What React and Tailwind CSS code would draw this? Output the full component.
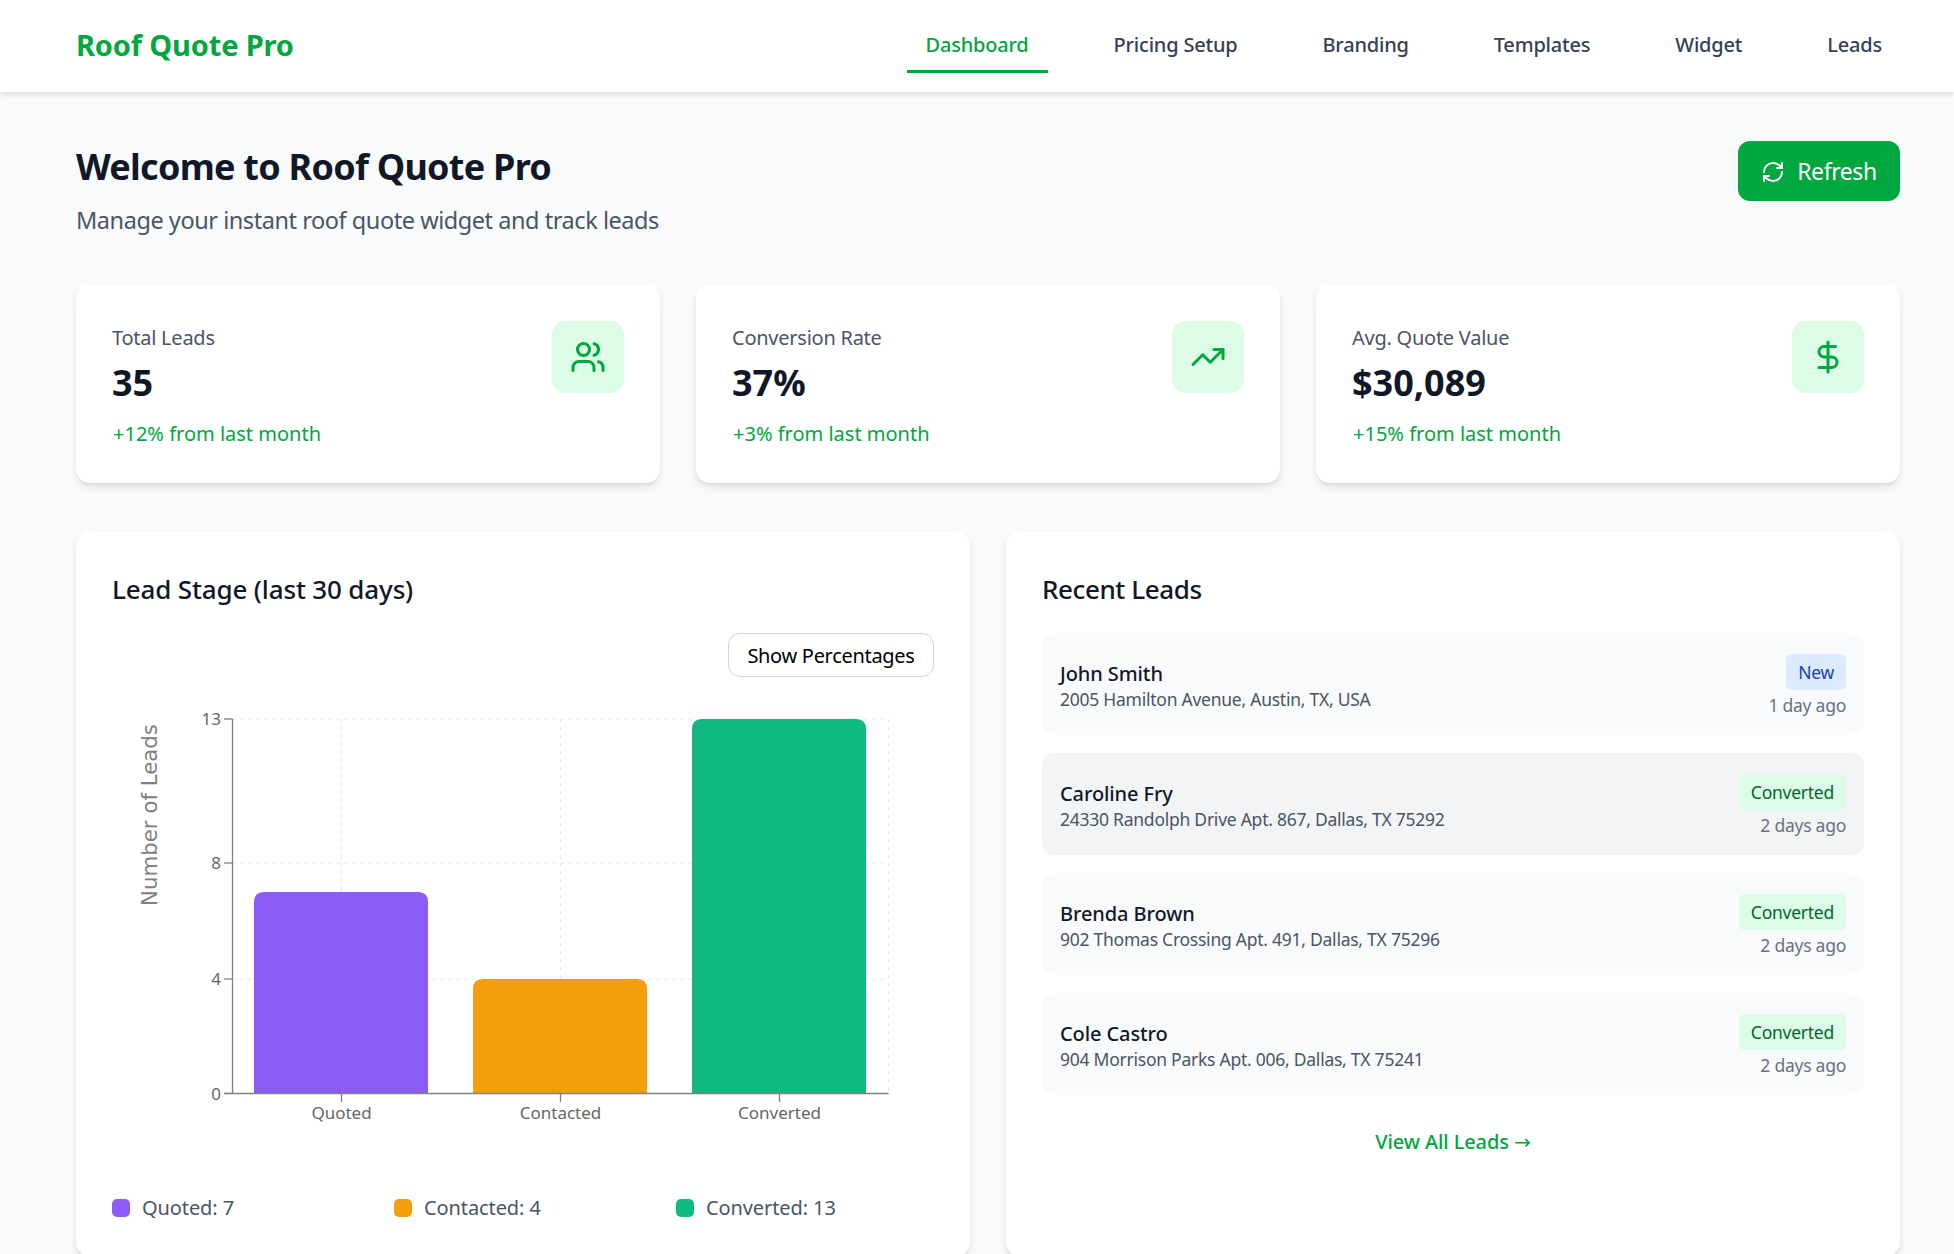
import React from 'react'
import { Users, TrendingUp, DollarSign, RefreshCw } from 'lucide-react'

const navItems = ['Dashboard', 'Pricing Setup', 'Branding', 'Templates', 'Widget', 'Leads']

const stats = [
  { label: 'Total Leads', value: '35', change: '+12% from last month', Icon: Users },
  { label: 'Conversion Rate', value: '37%', change: '+3% from last month', Icon: TrendingUp },
  { label: 'Avg. Quote Value', value: '$30,089', change: '+15% from last month', Icon: DollarSign },
]

const leads = [
  { name: 'John Smith', address: '2005 Hamilton Avenue, Austin, TX, USA', status: 'New', time: '1 day ago' },
  { name: 'Caroline Fry', address: '24330 Randolph Drive Apt. 867, Dallas, TX 75292', status: 'Converted', time: '2 days ago', active: true },
  { name: 'Brenda Brown', address: '902 Thomas Crossing Apt. 491, Dallas, TX 75296', status: 'Converted', time: '2 days ago' },
  { name: 'Cole Castro', address: '904 Morrison Parks Apt. 006, Dallas, TX 75241', status: 'Converted', time: '2 days ago' },
]

function Nav() {
  return (
    <nav className="h-[92px] bg-white shadow-[0_2px_5px_rgba(0,0,0,0.14)] relative flex items-center justify-between pl-[76px] pr-[53px]">
      <div className="text-[29px] font-bold text-[#00a63e] tracking-[-0.15px] mt-[-2px]">Roof Quote Pro</div>
      <ul className="flex gap-[47px] h-[50px] mt-[4px]">
        {navItems.map((item, i) => (
          <li
            key={item}
            className={
              i === 0
                ? 'px-[19px] text-[20px] font-medium tracking-[-0.2px] text-[#00a63e] border-b-[3px] border-[#00a63e] leading-[44px]'
                : 'px-[19px] text-[20px] font-medium tracking-[-0.2px] text-[#364153] leading-[44px]'
            }
          >
            {item}
          </li>
        ))}
      </ul>
    </nav>
  )
}

function StatCard({ label, value, change, Icon }) {
  return (
    <div className="h-[198px] bg-white rounded-[14px] shadow-[0_5px_8px_-1px_rgba(0,0,0,0.1),0_2px_5px_-2px_rgba(0,0,0,0.1)] p-[36px] flex justify-between">
      <div>
        <div className="text-[20px] leading-[32px] text-[#4a5565] tracking-[-0.25px] mt-[1px]">{label}</div>
        <div className="text-[36px] leading-[48px] font-bold text-[#101828] mt-[5px]">{value}</div>
        <div className="text-[20px] leading-[32px] text-[#00a63e] mt-[11px] ml-[1px]">{change}</div>
      </div>
      <div className="w-[72px] h-[72px] rounded-[14px] bg-[#dcfce7] flex items-center justify-center text-[#00a63e]">
        <Icon size={36} strokeWidth={2} />
      </div>
    </div>
  )
}

function Chart() {
  const gridH = [719, 863, 979]
  const gridV = [341.5, 560.5, 779.5, 888.5]
  const bars = [
    { x: 254, y: 892, w: 174, fill: '#8b5cf6' },
    { x: 473, y: 979, w: 174, fill: '#f59e0b' },
    { x: 692, y: 719, w: 174, fill: '#10b981' },
  ]
  const yTicks = [
    { y: 719, t: '13' },
    { y: 863, t: '8' },
    { y: 979, t: '4' },
    { y: 1093.5, t: '0' },
  ]
  const xTicks = [
    { x: 341.5, t: 'Quoted' },
    { x: 560.5, t: 'Contacted' },
    { x: 779.5, t: 'Converted' },
  ]
  return (
    <svg viewBox="112 700 822 430" className="block w-[822px] h-[430px] mt-[23px]">
      {gridH.map((y) => (
        <line key={y} x1="232.5" x2="888.5" y1={y} y2={y} stroke="#e5e7eb" strokeWidth="1.2" strokeDasharray="4 4" />
      ))}
      {gridV.map((x) => (
        <line key={x} x1={x} x2={x} y1="719" y2="1093.5" stroke="#e5e7eb" strokeWidth="1.2" strokeDasharray="4 4" />
      ))}
      {bars.map((b) => {
        const bottom = 1093.5
        const r = 10
        return (
          <path
            key={b.x}
            d={`M${b.x} ${bottom}V${b.y + r}Q${b.x} ${b.y} ${b.x + r} ${b.y}H${b.x + b.w - r}Q${b.x + b.w} ${b.y} ${b.x + b.w} ${b.y + r}V${bottom}Z`}
            fill={b.fill}
          />
        )
      })}
      <line x1="232.5" x2="232.5" y1="719" y2="1093.5" stroke="#808080" strokeWidth="1.3" />
      <line x1="224" x2="888.5" y1="1093.5" y2="1093.5" stroke="#808080" strokeWidth="1.3" />
      {yTicks.map((t) => (
        <g key={t.y}>
          <line x1="224" x2="232.5" y1={t.y} y2={t.y} stroke="#808080" strokeWidth="1.3" />
          <text x="221" y={t.y + 6} textAnchor="end" fontSize="17" fill="#666666">{t.t}</text>
        </g>
      ))}
      {xTicks.map((t) => (
        <g key={t.x}>
          <line x1={t.x} x2={t.x} y1="1093.5" y2="1102" stroke="#808080" strokeWidth="1.3" />
          <text x={t.x} y="1119" textAnchor="middle" fontSize="17" fill="#666666">{t.t}</text>
        </g>
      ))}
      <text
        transform="translate(157 815) rotate(-90)"
        textAnchor="middle"
        fontSize="21.3"
        fill="#808080"
        fontFamily="'DejaVu Sans', sans-serif"
      >
        Number of Leads
      </text>
    </svg>
  )
}

function LeadRow({ lead }) {
  return (
    <div
      className={
        (lead.active ? 'bg-[#f3f4f6]' : 'bg-[#f9fafb]') +
        ' h-[102px] rounded-[12px] px-[18px] flex items-center justify-between'
      }
    >
      <div className="mt-[2px]">
        <div className="text-[20px] leading-[28px] font-medium text-[#101828] tracking-[-0.1px]">{lead.name}</div>
        <div className="text-[17.5px] leading-[24px] mt-[-1px] text-[#4a5565] tracking-[-0.25px]">{lead.address}</div>
      </div>
      <div className="flex flex-col items-end mt-[2px]">
        <span
          className={
            (lead.status === 'New' ? 'bg-[#dbeafe] text-[#193cb8]' : 'bg-[#dcfce7] text-[#016630]') +
            ' h-[36px] px-[12px] rounded-[6px] text-[17.5px] leading-[36px] tracking-[-0.25px]'
          }
        >
          {lead.status}
        </span>
        <span className="text-[17.5px] leading-[24px] mt-[3px] text-[#6a7282] tracking-[-0.25px]">{lead.time}</span>
      </div>
    </div>
  )
}

export default function App() {
  return (
    <div className="h-[1254px] overflow-hidden bg-[#f9fafb] font-['Noto_Sans',sans-serif]">
      <Nav />
      <main className="pl-[76px] pr-[54px] pt-[49px]">
        <div className="flex justify-between items-start">
          <div>
            <h1 className="text-[36px] leading-[50px] font-bold text-[#101828] tracking-[-0.75px] mt-[1px]">Welcome to Roof Quote Pro</h1>
            <p className="text-[23.5px] leading-[34px] text-[#4a5565] mt-[11px] mb-[1px] tracking-[-0.45px]">Manage your instant roof quote widget and track leads</p>
          </div>
          <button className="w-[162px] h-[60px] pt-[1px] rounded-[12px] bg-[#00a63e] text-white text-[23px] tracking-[-0.4px] flex items-center justify-center gap-[12px]">
            <RefreshCw size={24} strokeWidth={2} />
            Refresh
          </button>
        </div>

        <div className="grid grid-cols-3 gap-[36px] mt-[47px]">
          {stats.map((s) => (
            <StatCard key={s.label} {...s} />
          ))}
        </div>

        <div className="grid grid-cols-2 gap-[36px] mt-[49px]">
          <section className="h-[724px] bg-white rounded-[14px] shadow-[0_5px_8px_-1px_rgba(0,0,0,0.1),0_2px_5px_-2px_rgba(0,0,0,0.1)] p-[36px]">
            <h2 className="text-[26px] leading-[44px] font-medium text-[#101828] tracking-[-0.15px] mt-[-1px] mb-[1px]">Lead Stage (last 30 days)</h2>
            <div className="flex justify-end mt-[22px]">
              <button className="w-[206px] h-[44px] pt-[1px] border border-[#d1d5dc] rounded-[12px] bg-white text-black text-[20px] tracking-[-0.3px]">Show Percentages</button>
            </div>
            <Chart />
            <div className="flex mt-[64px]">
              {[
                ['Quoted: 7', 'bg-[#8b5cf6]'],
                ['Contacted: 4', 'bg-[#f59e0b]'],
                ['Converted: 13', 'bg-[#10b981]'],
              ].map(([label, color]) => (
                <div key={label} className="w-[282px] shrink-0 flex items-center gap-[12px]">
                  <span className={color + ' w-[18px] h-[18px] rounded-[5px]'}></span>
                  <span className="text-[20px] leading-[28px] text-[#4a5565] tracking-[-0.1px]">{label}</span>
                </div>
              ))}
            </div>
          </section>

          <section className="h-[724px] bg-white rounded-[14px] shadow-[0_5px_8px_-1px_rgba(0,0,0,0.1),0_2px_5px_-2px_rgba(0,0,0,0.1)] p-[36px]">
            <h2 className="text-[26px] leading-[44px] font-medium text-[#101828] tracking-[-0.4px] mt-[-1px] mb-[1px]">Recent Leads</h2>
            <div className="flex flex-col gap-[18px] mt-[22px]">
              {leads.map((lead) => (
                <LeadRow key={lead.name} lead={lead} />
              ))}
            </div>
            <div className="text-center mt-[32px] text-[20px] leading-[30px] font-medium text-[#00a63e] tracking-[-0.1px]">
              View All Leads <span className="font-['DejaVu_Sans',sans-serif] font-normal">→</span>
            </div>
          </section>
        </div>
      </main>
    </div>
  )
}
